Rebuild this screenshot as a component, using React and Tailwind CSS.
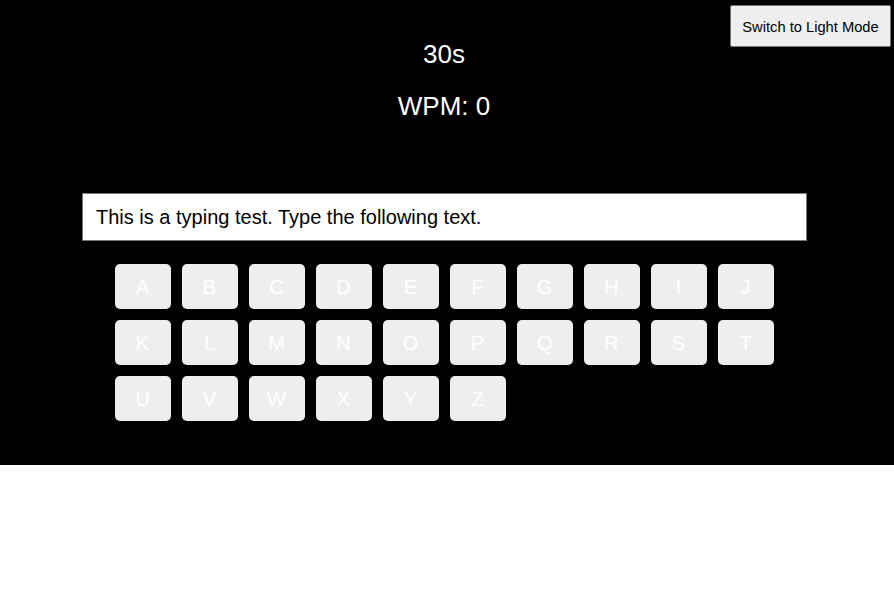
export default function App() {
  const rows = [
    ["A", "B", "C", "D", "E", "F", "G", "H", "I", "J"],
    ["K", "L", "M", "N", "O", "P", "Q", "R", "S", "T"],
    ["U", "V", "W", "X", "Y", "Z"],
  ];
  return (
    <div className="relative w-full" style={{ fontFamily: '"Liberation Sans", Arial, sans-serif' }}>
      <div className="bg-black w-full h-[465px]">
        <div className="w-[888px] flex flex-col items-center">
          <div className="mt-[39px] h-[30px] leading-[30px] text-[26px] text-white">30s</div>
          <div className="mt-[22px] h-[30px] leading-[30px] text-[26px] text-white">WPM: 0</div>
          <div className="mt-[72px] ml-[1px] w-[725px] h-[48px] bg-white border border-[#767676] flex items-center pl-[13px] text-[20px] text-black">
            This is a typing test. Type the following text.
          </div>
          <div className="mt-[23px] w-[659px] flex flex-col gap-[11px]">
            {rows.map((row, i) => (
              <div key={i} className="flex gap-[11px]">
                {row.map((k) => (
                  <div
                    key={k}
                    className="w-[56px] h-[45px] rounded-[5px] bg-[#eeeeee] text-white text-[20px] flex items-center justify-center"
                  >
                    {k}
                  </div>
                ))}
              </div>
            ))}
          </div>
        </div>
      </div>
      <button className="absolute top-[5px] right-[3px] w-[161px] h-[42px] pt-[2px] bg-[#efefef] border border-[#767676] rounded-[2px] text-[14.7px] text-black flex items-center justify-center">
        Switch to Light Mode
      </button>
    </div>
  );
}
